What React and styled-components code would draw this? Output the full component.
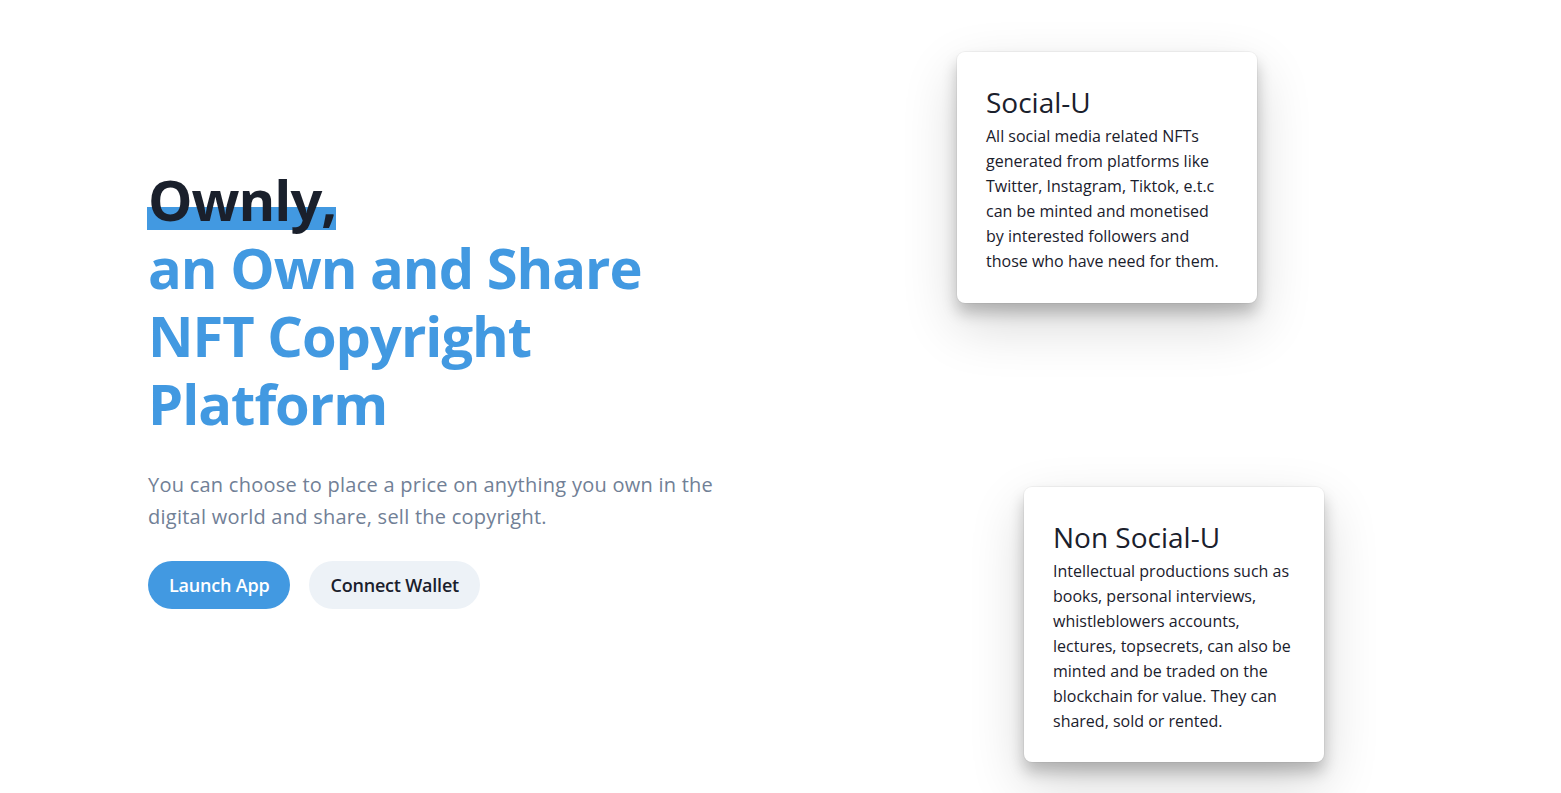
import React from "react";
import styled, { createGlobalStyle } from "styled-components";

const Global = createGlobalStyle`
  html, body { margin: 0; padding: 0; background: #ffffff; }
  body { font-family: "Open Sans", "Noto Sans", sans-serif; color: #1A202C; }
  * { box-sizing: border-box; }
`;

const Page = styled.main`
  display: flex;
  min-height: 793px;
  width: 1561px;
  overflow: hidden;
`;

const Left = styled.section`
  flex: 0 0 900px;
  display: flex;
  flex-direction: column;
  justify-content: center;
  padding-left: 148px;
  padding-bottom: 20px;
`;

const Heading = styled.h1`
  margin: 0;
  font-size: 56px;
  line-height: 68px;
  font-weight: 700;
  letter-spacing: -1px;
  max-width: 560px;
`;

const Highlight = styled.span`
  position: relative;
  isolation: isolate;
  color: #1A202C;
  &::after {
    content: "";
    position: absolute;
    left: -1px;
    right: 0;
    bottom: 7px;
    height: 23px;
    background: #4299E1;
    z-index: -1;
  }
`;

const Accent = styled.span`
  color: #4299E1;
`;

const Lead = styled.p`
  margin: 32px 0 0;
  font-size: 20px;
  line-height: 32px;
  letter-spacing: 0.25px;
  color: #718096;
  max-width: 580px;
`;

const Actions = styled.div`
  display: flex;
  gap: 19px;
  margin-top: 28px;
`;

const Button = styled.button`
  height: 48px;
  padding: 0 21px;
  border: none;
  border-radius: 999px;
  font-family: inherit;
  font-size: 18px;
  font-weight: 600;
  letter-spacing: -0.2px;
  cursor: pointer;
  background: ${(p) => (p.$primary ? "#4299E1" : "#EDF2F7")};
  color: ${(p) => (p.$primary ? "#ffffff" : "#1A202C")};
`;

const Right = styled.section`
  flex: 1;
  display: flex;
  flex-direction: column;
  padding-top: 52px;
  gap: 184px;
`;

const Card = styled.article`
  width: 300px;
  margin-left: ${(p) => p.$offset}px;
  background: #ffffff;
  border-radius: 8px;
  padding: 32px 33px 28px 29px;
  box-shadow: 0 0 0 1px rgba(0, 0, 0, 0.04), 0 10px 15px rgba(0, 0, 0, 0.22),
    0 22px 55px rgba(0, 0, 0, 0.16);
`;

const CardTitle = styled.h2`
  margin: 0 0 4px;
  font-size: 28px;
  line-height: 36px;
  font-weight: 400;
  color: #1A202C;
`;

const CardText = styled.p`
  margin: 0;
  font-size: 16px;
  line-height: 25.1px;
  color: #1A202C;
`;

const cards = [
  {
    title: "Social-U",
    offset: 57,
    text: "All social media related NFTs generated from platforms like Twitter, Instagram, Tiktok, e.t.c can be minted and monetised by interested followers and those who have need for them.",
  },
  {
    title: "Non Social-U",
    offset: 124,
    text: "Intellectual productions such as books, personal interviews, whistleblowers accounts, lectures, topsecrets, can also be minted and be traded on the blockchain for value. They can shared, sold or rented.",
  },
];

export default function App() {
  return (
    <>
      <Global />
      <Page>
        <Left>
          <Heading>
            <Highlight>Ownly,</Highlight>
            <br />
            <Accent>an Own and Share NFT Copyright Platform</Accent>
          </Heading>
          <Lead>
            You can choose to place a price on anything you own in the digital
            world and share, sell the copyright.
          </Lead>
          <Actions>
            <Button $primary>Launch App</Button>
            <Button>Connect Wallet</Button>
          </Actions>
        </Left>
        <Right>
          {cards.map((c) => (
            <Card key={c.title} $offset={c.offset}>
              <CardTitle>{c.title}</CardTitle>
              <CardText>{c.text}</CardText>
            </Card>
          ))}
        </Right>
      </Page>
    </>
  );
}
